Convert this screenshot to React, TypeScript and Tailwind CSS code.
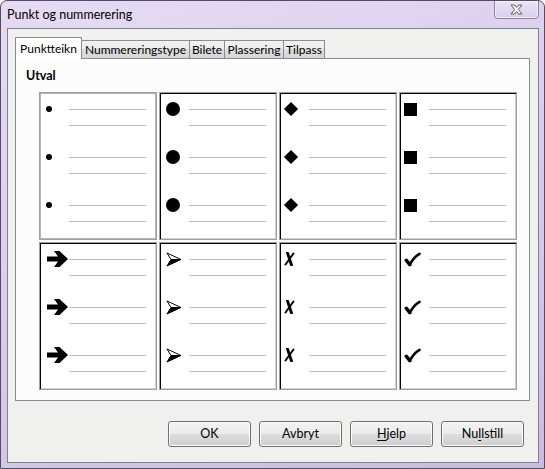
import React from 'react';

const font = "font-['Lato',sans-serif]";

function Dot() {
  return <div className="ml-[6px] w-[6px] h-[6px] rounded-full bg-black" />;
}
function BigDot() {
  return <div className="ml-[6px] w-[14px] h-[14px] rounded-full bg-black" />;
}
function Diamond() {
  return <div className="ml-[6px] w-[10px] h-[10px] rotate-45 bg-black" />;
}
function Square() {
  return <div className="ml-[4px] w-[13px] h-[13px] bg-black" />;
}
function HeavyArrow() {
  return (
    <svg className="ml-[7px]" width="22" height="18" viewBox="0 0 22 18">
      <path d="M0 6.5 H11 L7 1 H12.5 L21 9 L12.5 17 H7 L11 11.5 H0 Z" fill="#000" />
    </svg>
  );
}
function ArrowHead() {
  return (
    <svg className="ml-[6px]" width="16" height="15" viewBox="0 0 16 15">
      <path d="M1 1 L15 7.5 L5 7.5 Z" fill="#fff" stroke="#000" strokeWidth="1" strokeLinejoin="round" />
      <path d="M5 7.5 L15 7.5 L1 14 Z" fill="#000" stroke="#000" strokeWidth="1" strokeLinejoin="round" />
    </svg>
  );
}
function Cross() {
  return (
    <svg className="ml-[4px]" width="11" height="14" viewBox="0 0 11 14">
      <path d="M3.5 1 L7.5 13" stroke="#000" strokeWidth="2.8" strokeLinecap="round" />
      <path d="M9.5 1.5 L1.5 12.5" stroke="#000" strokeWidth="2" strokeLinecap="round" />
    </svg>
  );
}
function Check() {
  return (
    <svg className="ml-[4px]" width="17" height="15" viewBox="0 0 17 15">
      <path d="M2.2 8.2 L5.8 12.6" stroke="#000" strokeWidth="3.4" strokeLinecap="round" />
      <path d="M5.8 12.6 C8.5 7.5 11.5 4 15.5 1.8" stroke="#000" strokeWidth="2.6" strokeLinecap="round" fill="none" />
    </svg>
  );
}

function Cell({ icon, selected }: { icon: React.ReactNode; selected?: boolean }) {
  return (
    <div
      className={`w-[118px] h-[148px] bg-white border border-[#a0a0a0] flex flex-col ${
        selected
          ? 'shadow-[inset_1px_1px_0_#b4b4b4,inset_-1px_-1px_0_#b4b4b4]'
          : 'shadow-[inset_1px_1px_0_#000,inset_-1px_-1px_0_#cfcfcf]'
      }`}
    >
      {[0, 1, 2].map((i) => (
        <div key={i} className="flex h-[48px]">
          <div className="w-[29px] h-[32px] flex items-center">{icon}</div>
          <div className="flex flex-col">
            <div className="mt-[16px] w-[77px] h-px bg-[#bdbdbd]" />
            <div className="mt-[15px] w-[77px] h-px bg-[#bdbdbd]" />
          </div>
        </div>
      ))}
    </div>
  );
}

function Tab({ label, w, active }: { label: string; w: string; active?: boolean }) {
  if (active) {
    return (
      <div className={`${w} h-[22px] bg-white border border-b-0 border-[#898c95] flex items-start justify-center pt-[3px] text-black leading-[15px]`}>
        {label}
      </div>
    );
  }
  return (
    <div
      className={`${w} h-[19px] border border-[#898c95] -ml-px bg-[linear-gradient(to_bottom,#f2f2f2_0%,#ebebeb_50%,#dddddd_50%,#d6d6d6_100%)] flex items-center justify-center text-black leading-none`}
    >
      {label}
    </div>
  );
}

function Btn({ children }: { children: React.ReactNode }) {
  return (
    <div className="w-[83px] h-[26px] rounded-[3px] border border-[#707070] bg-[linear-gradient(to_bottom,#f2f2f2_0%,#ebebeb_50%,#dddddd_50%,#cfcfcf_100%)] shadow-[inset_0_0_0_1px_#fcfcfc] flex items-center justify-center text-[12.5px] text-black">
      {children}
    </div>
  );
}

export default function App() {
  const icons = [
    <Dot />,
    <BigDot />,
    <Diamond />,
    <Square />,
    <HeavyArrow />,
    <ArrowHead />,
    <Cross />,
    <Check />,
  ];
  return (
    <div
      className={`${font} w-[545px] h-[469px] flex flex-col rounded-t-[7px] border border-[#4e4f63] bg-[linear-gradient(160deg,#e6dbf3_0%,#dccfee_40%,#d3c6e6_70%,#c9bcde_100%)] overflow-hidden`}
    >
      <div className="h-[27px] flex items-start shrink-0">
        <div className="pl-[6px] pt-[6px] text-[12.5px] leading-[16px] text-black">Punkt og nummerering</div>
        <div className="ml-auto mr-[5px] w-[45px] h-[19px] -mt-px rounded-b-[4px] border border-[#8d809f] bg-[linear-gradient(to_bottom,#ece4f6,#d9cdea)] shadow-[inset_0_0_0_1px_#f4effa] flex items-center justify-center">
          <svg width="13" height="11" viewBox="0 0 13 11">
            <path
              d="M1 1 H4.5 L6.5 3.5 L8.5 1 H12 L8.3 5.5 L12 10 H8.5 L6.5 7.5 L4.5 10 H1 L4.7 5.5 Z"
              fill="#fff"
              stroke="#5c5c66"
              strokeWidth="1"
              strokeLinejoin="round"
            />
          </svg>
        </div>
      </div>
      <div className="flex-1 ml-[6px] mr-[5px] mb-[5px] border border-[#7f8296] bg-[#f0f0ee] flex flex-col pl-[7px] pr-[8px] pt-[8px]">
        <div className="flex items-end text-[12px] relative z-10 -mb-px">
          <Tab label="Punktteikn" w="w-[67px]" active />
          <Tab label="Nummereringstype" w="w-[109px]" />
          <Tab label="Bilete" w="w-[36px]" />
          <Tab label="Plassering" w="w-[60px]" />
          <Tab label="Tilpass" w="w-[42px]" />
        </div>
        <div className="h-[343px] border border-[#898c95] bg-[#fcfcfc] pl-[10px] pt-[9px]">
          <div className="text-[12.5px] leading-[16px] font-bold text-black">Utval</div>
          <div className="ml-[13px] mt-[8px] grid grid-cols-[repeat(4,118px)] gap-x-[2px] gap-y-[2px]">
            {icons.map((ic, i) => (
              <Cell key={i} icon={ic} selected={i === 0} />
            ))}
          </div>
        </div>
        <div className="flex justify-end gap-[8px] mt-[20px] mr-[6px]">
          <Btn>OK</Btn>
          <Btn>Avbryt</Btn>
          <Btn>
            <span className="underline underline-offset-2">H</span>jelp
          </Btn>
          <Btn>
            Nu<span className="underline underline-offset-2">l</span>lstill
          </Btn>
        </div>
      </div>
    </div>
  );
}
